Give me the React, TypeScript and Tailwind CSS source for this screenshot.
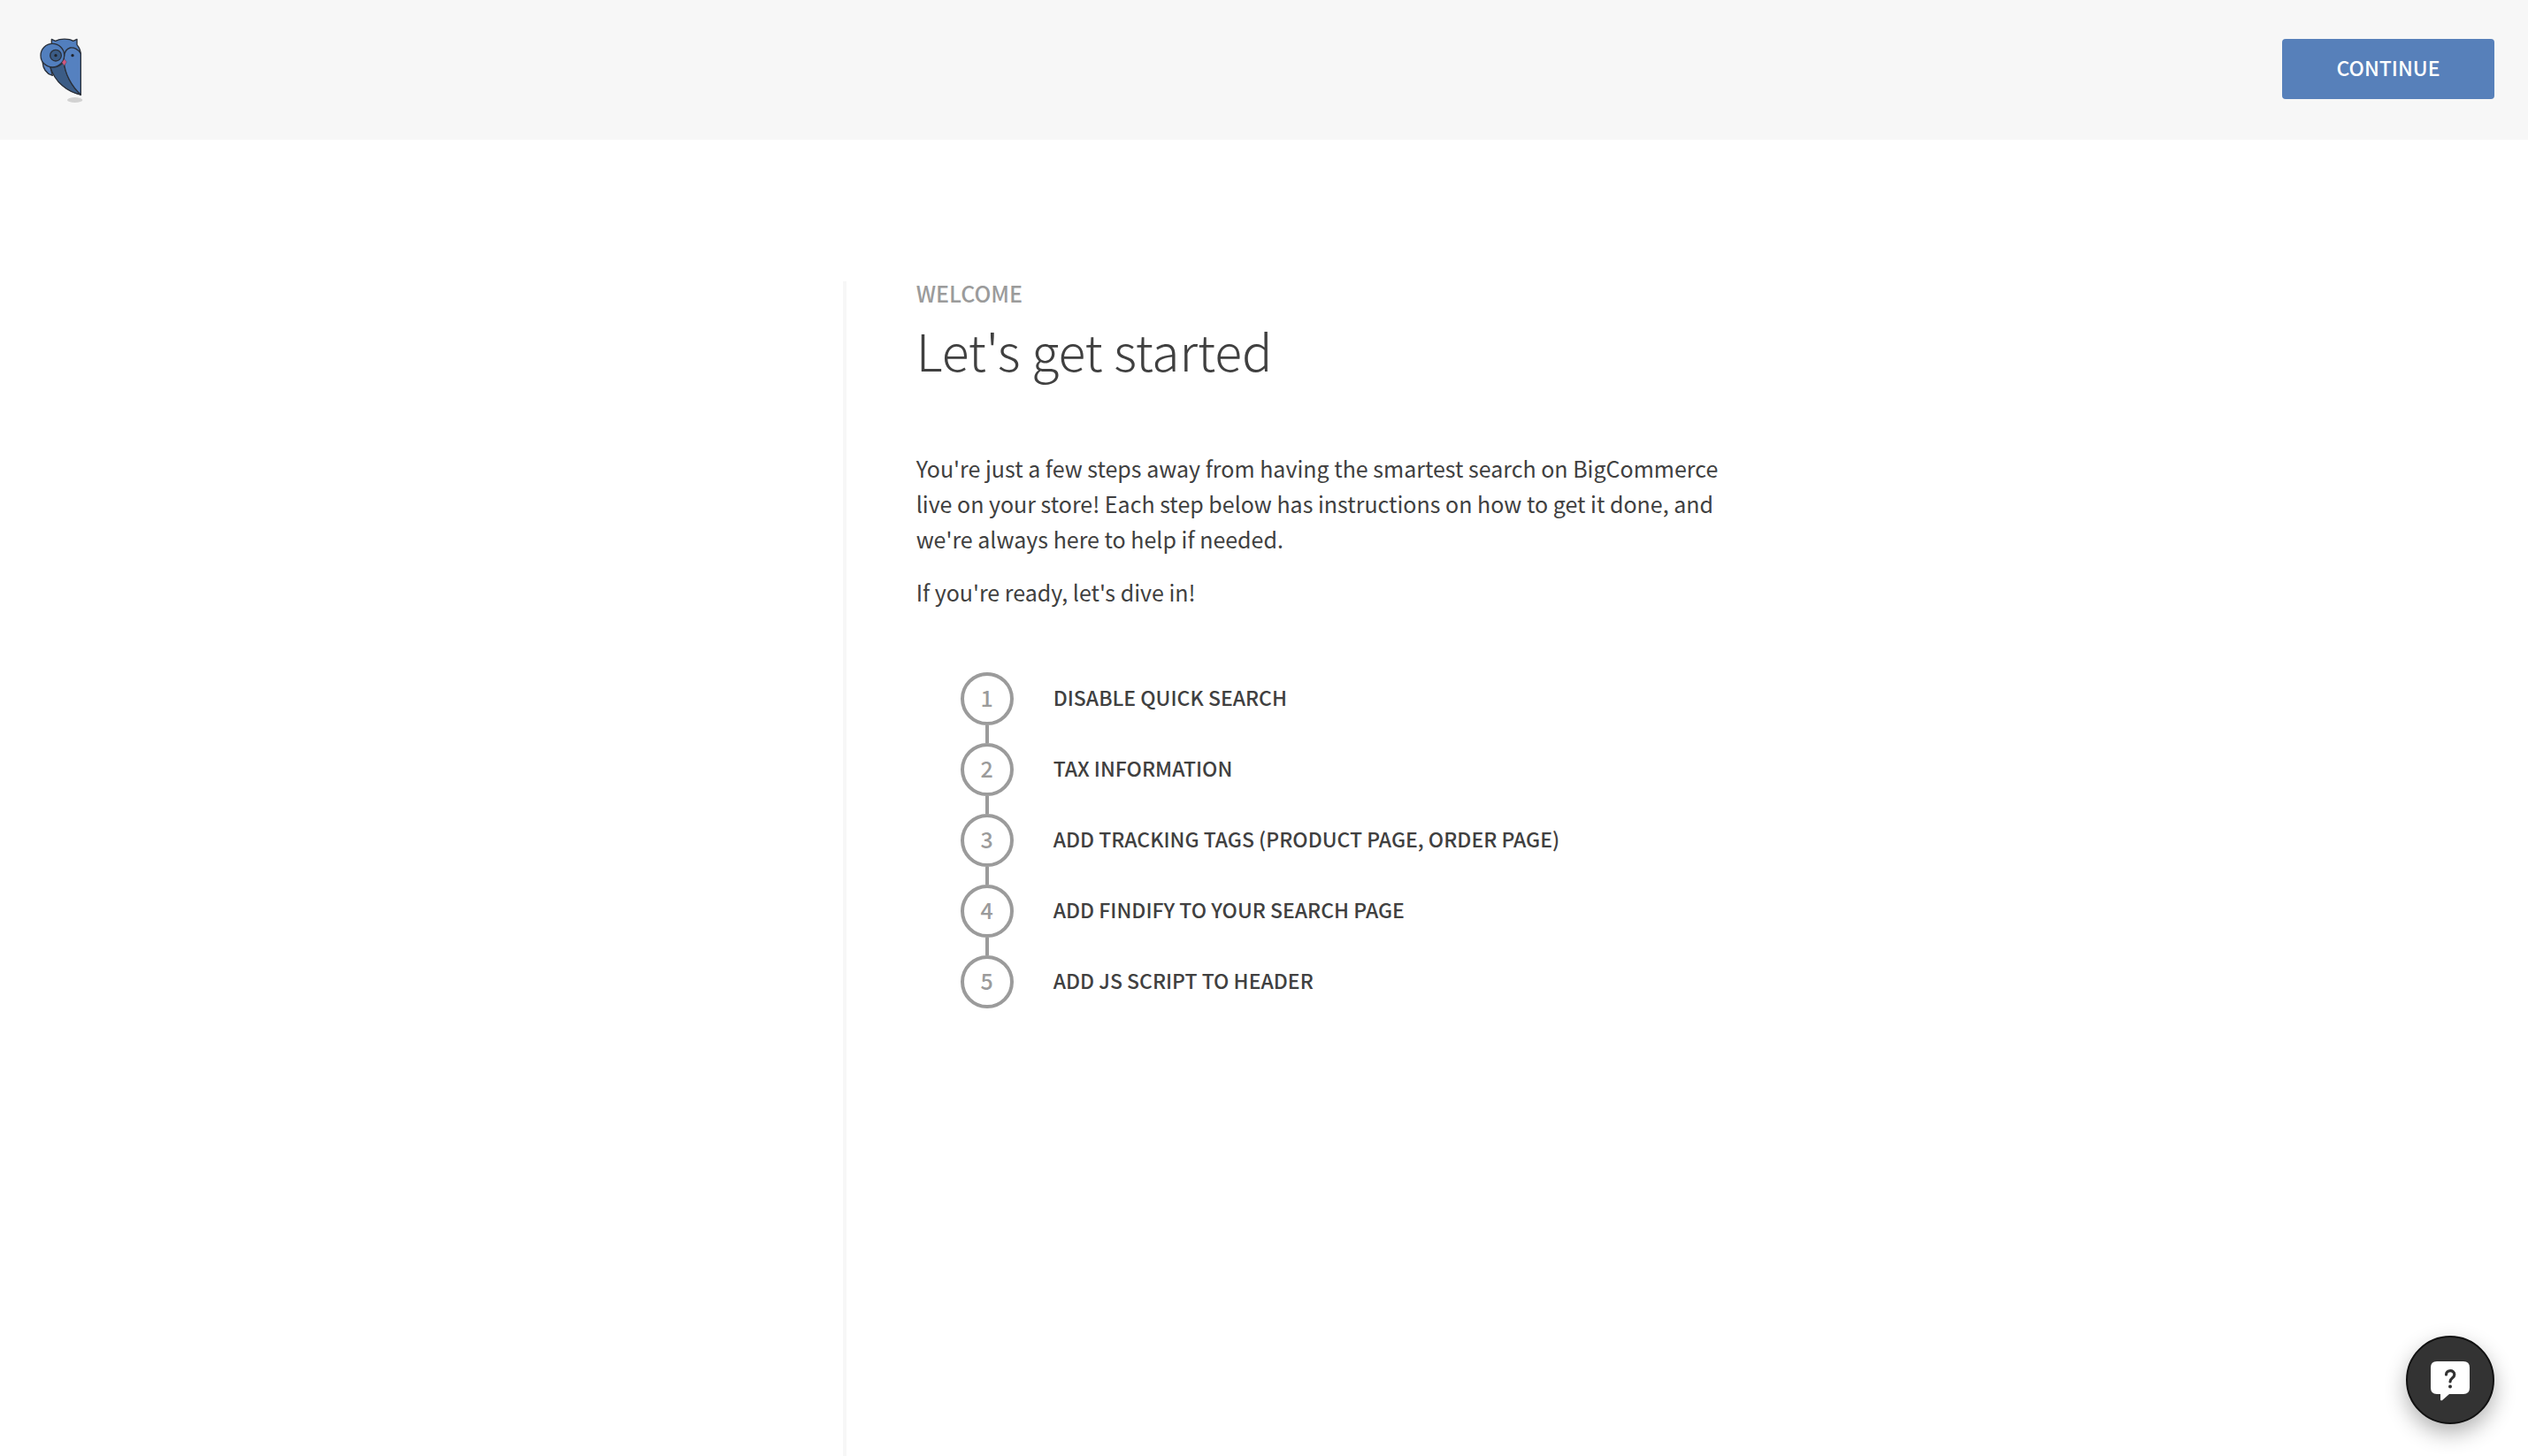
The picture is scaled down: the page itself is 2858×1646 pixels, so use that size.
import React from "react";

const steps = [
  "Disable quick search",
  "Tax information",
  "Add tracking tags (product page, order page)",
  "Add Findify to your search page",
  "Add JS script to header",
];

function OwlLogo() {
  return (
    <svg viewBox="0 0 240 300" className="h-[100px] w-[80px]" aria-hidden="true">
      <ellipse cx="164" cy="249" rx="26" ry="9" fill="#d2d2d2" />
      <g stroke="#2a303a" strokeWidth="4" strokeLinejoin="round" strokeLinecap="round">
        <path d="M54 118 C56 146 66 160 88 166 L80 134 Z" fill="#5a85c4" />
        <path
          d="M85 58 L85 43 L98 49 C114 40 144 40 158 49 L171 43 L171 62 C180 72 184 84 184 98 L184 231 C140 220 100 190 82 136 Z"
          fill="#527fbe"
        />
        <path d="M80 136 C96 140 114 134 126 120 C132 160 152 200 184 231 C140 222 96 190 80 136 Z" fill="#3b5c86" />
        <path d="M127 120 C130 160 152 202 184 231 L184 92 C176 76 160 70 148 72 C134 76 128 88 127 104 Z" fill="#5581c0" />
        <circle cx="88" cy="98" r="40" fill="#527fbe" />
        <circle cx="99" cy="98" r="19" fill="#3b5c86" />
      </g>
      <circle cx="99" cy="98" r="5" fill="#20242b" />
      <circle cx="156" cy="98" r="5" fill="#20242b" />
      <path d="M128 110 L136 120 L128 133 L120 122 Z" fill="#d0577f" stroke="#2a303a" strokeWidth="1" />
    </svg>
  );
}

function HelpIcon() {
  return (
    <svg viewBox="0 0 44 46" className="h-[46px] w-[44px]" aria-hidden="true">
      <path
        d="M7 0 H37 Q44 0 44 7 V30 Q44 37 37 37 H21 L13 44 Q11 45 11 43 V37 H7 Q0 37 0 30 V7 Q0 0 7 0 Z"
        fill="#fff"
      />
      <path
        d="M17.5 15 C17.5 9.5 26.8 9 26.8 15 C26.8 19 22 18.5 22 23"
        fill="none"
        stroke="#333"
        strokeWidth="3.2"
        strokeLinecap="round"
      />
      <circle cx="22" cy="28.5" r="2" fill="#333" />
    </svg>
  );
}

export default function App() {
  return (
    <div className="flex min-h-screen flex-col bg-white font-['Noto_Sans_CJK_SC','Noto_Sans',sans-serif] text-[#404040]">
      <header className="flex items-start justify-between bg-[#f7f7f7] pr-[38px] pl-[30px]">
        <a href="#" aria-label="Home" className="mt-[30px] mb-7 block">
          <OwlLogo />
        </a>
        <button
          type="button"
          className="mt-11 h-[68px] w-60 rounded bg-[#5780ba] pb-1 text-[23px] leading-[36px] font-medium text-white uppercase"
        >
          Continue
        </button>
      </header>

      <div className="grid flex-1 grid-cols-3 pt-40">
        <main className="col-span-2 col-start-2 border-l-4 border-[#f7f7f7] pl-[79px]">
          <p className="text-[25px] leading-[26px] font-medium text-[#9b9b9b] uppercase">Welcome</p>
          <h1 className="mt-2 text-[57px] leading-[86px] font-light">Let's get started</h1>
          <div className="mt-[71px] flex max-w-[932px] flex-col gap-5 text-[25px] leading-10">
            <p>
              You're just a few steps away from having the smartest search on BigCommerce live on your store! Each step
              below has instructions on how to get it done, and we're always here to help if needed.
            </p>
            <p>If you're ready, let's dive in!</p>
          </div>
          <ol className="mt-[71px] ml-[50px] flex flex-col">
            {steps.map((step, i) => (
              <li key={step} className="group flex gap-[45px]">
                <div className="flex flex-col items-center">
                  <span className="flex h-[60px] w-[60px] items-center justify-center rounded-full border-4 border-[#9b9b9b] pb-1 text-[25px] leading-[30px] font-medium text-[#9b9b9b]">
                    {i + 1}
                  </span>
                  <span className="h-5 w-1 bg-[#9b9b9b] group-last:hidden" />
                </div>
                <span className="text-[23px] leading-[56px] font-medium uppercase">{step}</span>
              </li>
            ))}
          </ol>
        </main>
      </div>

      <button
        type="button"
        aria-label="Help"
        className="fixed right-[38px] bottom-9 flex h-[100px] w-[100px] items-center justify-center rounded-full border-2 border-[#111] bg-[#333] pt-1 shadow-[0_10px_24px_rgba(0,0,0,0.3)]"
      >
        <HelpIcon />
      </button>
    </div>
  );
}
